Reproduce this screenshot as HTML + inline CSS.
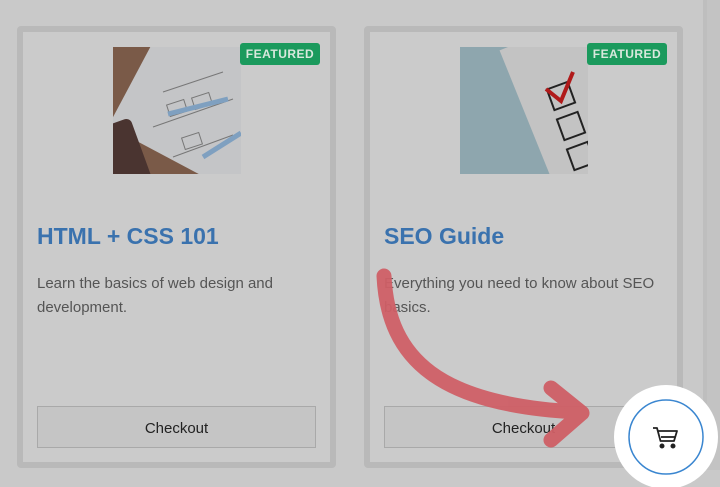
<!DOCTYPE html>
<html><head><style>
body{margin:0;width:720px;height:487px;background:#c9c9c9;position:relative;overflow:hidden;font-family:"Liberation Sans",sans-serif}
.card{position:absolute;top:26px;width:307px;height:430px;border:6px solid #b9b9b9;border-radius:4px;background:#cbcbcb}
.img{position:absolute;top:15px;width:128px;height:127px;overflow:hidden}
.badge{position:absolute;top:11px;width:80px;height:22px;background:#1b9a5d;border-radius:3px;color:#d8e8dd;font-size:12px;font-weight:bold;letter-spacing:.5px;text-align:center;line-height:22px}
.t{position:absolute;left:14px;top:191px;color:#3a72ae;font-size:23px;font-weight:bold}
.d{position:absolute;left:14px;top:240px;width:292px;color:#555;font-size:15px;line-height:24px}
.b{position:absolute;left:14px;top:374px;width:277px;height:40px;border:1px solid #a9a9a9;background:#c5c5c5;text-align:center;line-height:44px;font-size:15px;color:#222}
</style></head><body>
<div style="position:absolute;left:703px;top:0;width:20px;height:470px;background:#c3c3c3;border-left:4px solid #bebebe"></div>
<div class="card" style="left:17px">
 <div class="img" style="left:90px;background:#7a5a48">
  <div style="position:absolute;left:20px;top:-20px;width:140px;height:140px;background:#c4c5c7;transform:rotate(28deg)"></div>
  <div style="position:absolute;left:-10px;top:75px;width:40px;height:70px;background:#4a3430;border-radius:6px;transform:rotate(-20deg)"></div>
  <svg style="position:absolute;left:0;top:0" width="128" height="127"><g fill="none" stroke="#777" stroke-width="1"><path d="M50 45l60-20M40 80l80-28M60 110l60-22"/><rect x="55" y="55" width="18" height="12" transform="rotate(-18 64 61)"/><rect x="80" y="48" width="18" height="12" transform="rotate(-18 89 54)"/><rect x="70" y="88" width="18" height="12" transform="rotate(-18 79 94)"/></g><path d="M55 67l60-15M90 110l38-24" stroke="#7fa0c0" stroke-width="5"/></svg>
 </div>
 <div class="badge" style="left:217px">FEATURED</div>
 <div class="t">HTML + CSS 101</div>
 <div class="d">Learn the basics of web design and development.</div>
 <div class="b">Checkout</div>
</div>
<div class="card" style="left:364px">
 <div class="img" style="left:90px;background:#8ea6ae">
  <div style="position:absolute;left:70px;top:-20px;width:90px;height:180px;background:#c3c3c3;transform:rotate(-22deg)"></div>
  <svg style="position:absolute;left:0;top:0" width="128" height="127"><g fill="none" stroke="#222" stroke-width="2"><rect x="90" y="38" width="22" height="22" transform="rotate(-20 101 49)"/><rect x="100" y="68" width="22" height="22" transform="rotate(-20 111 79)"/><rect x="110" y="98" width="22" height="22" transform="rotate(-20 121 109)"/></g><path d="M86 42L101 54L113 25" stroke="#b01a1a" stroke-width="4" fill="none"/></svg>
 </div>
 <div class="badge" style="left:217px">FEATURED</div>
 <div class="t">SEO Guide</div>
 <div class="d">Everything you need to know about SEO basics.</div>
 <div class="b">Checkout</div>
</div>
<svg style="position:absolute;left:0;top:0" width="720" height="487">
 <g stroke="#cf5f66" stroke-width="15" fill="none" stroke-linecap="round" stroke-linejoin="round" opacity=".95">
  <path d="M384 276C388 360 440 405 578 412"/>
  <path d="M551 388L582 413L551 440"/>
 </g>
 <circle cx="666" cy="437" r="52" fill="#fff"/>
 <circle cx="666" cy="437" r="37" fill="#fff" stroke="#3a86d0" stroke-width="1.5"/>
 <g fill="none" stroke="#222" stroke-width="1.8" stroke-linejoin="round">
  <path d="M653 428h4l3.5 13h13.5l3-10h-19"/>
  <path d="M661 437h14"/>
  <circle cx="662" cy="446" r="1.6" fill="#222"/><circle cx="673" cy="446" r="1.6" fill="#222"/>
 </g>
</svg>
</body></html>
